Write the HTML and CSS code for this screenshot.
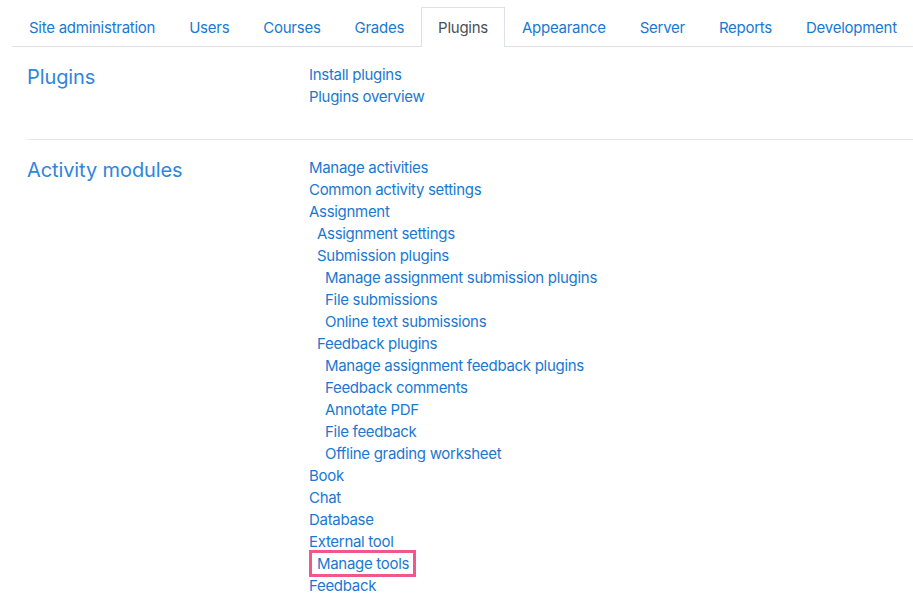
FILE: index.html
```html
<!DOCTYPE html>
<html>
<head>
<meta charset="utf-8">
<link rel="stylesheet" href="styles.css">
</head>
<body>
<ul class="tabs">
  <li class="tab"><a href="#">Site administration</a></li>
  <li class="tab"><a href="#">Users</a></li>
  <li class="tab"><a href="#">Courses</a></li>
  <li class="tab"><a href="#">Grades</a></li>
  <li class="tab active"><a href="#">Plugins</a></li>
  <li class="tab"><a href="#">Appearance</a></li>
  <li class="tab"><a href="#">Server</a></li>
  <li class="tab"><a href="#">Reports</a></li>
  <li class="tab"><a href="#">Development</a></li>
</ul>
<div class="content">
  <section class="row first">
    <h3 class="heading">Plugins</h3>
    <ul class="links">
      <li><a href="#">Install plugins</a></li>
      <li><a href="#">Plugins overview</a></li>
    </ul>
  </section>
  <section class="row">
    <h3 class="heading">Activity modules</h3>
    <ul class="links">
      <li><a href="#">Manage activities</a></li>
      <li><a href="#">Common activity settings</a></li>
      <li><a href="#">Assignment</a></li>
      <li class="l1"><a href="#">Assignment settings</a></li>
      <li class="l1"><a href="#">Submission plugins</a></li>
      <li class="l2"><a href="#">Manage assignment submission plugins</a></li>
      <li class="l2"><a href="#">File submissions</a></li>
      <li class="l2"><a href="#">Online text submissions</a></li>
      <li class="l1"><a href="#">Feedback plugins</a></li>
      <li class="l2"><a href="#">Manage assignment feedback plugins</a></li>
      <li class="l2"><a href="#">Feedback comments</a></li>
      <li class="l2"><a href="#">Annotate PDF</a></li>
      <li class="l2"><a href="#">File feedback</a></li>
      <li class="l2"><a href="#">Offline grading worksheet</a></li>
      <li><a href="#">Book</a></li>
      <li><a href="#">Chat</a></li>
      <li><a href="#">Database</a></li>
      <li><a href="#">External tool</a></li>
      <li class="highlight"><a href="#">Manage tools</a></li>
      <li><a href="#">Feedback</a></li>
    </ul>
  </section>
</div>
</body>
</html>
```
FILE: styles.css
```css
html, body {
  margin: 0;
  padding: 0;
  background: #fff;
  font-family: Inter, "Noto Sans", sans-serif;
  font-size: 15px;
  letter-spacing: -0.3px;
  line-height: 22px;
  color: #495057;
  overflow: hidden;
}
a {
  color: #1a78d2;
  text-decoration: none;
}
ul {
  list-style: none;
  margin: 0;
  padding: 0;
}
.tabs {
  display: flex;
  margin: 7px 0 0 12px;
  border-bottom: 1px solid #dee2e6;
  white-space: nowrap;
  letter-spacing: -0.26px;
}
.tab a {
  display: block;
  padding: 9px 16px 7px;
  border: 1px solid transparent;
  border-bottom: 0;
}
.tab.active a {
  color: #495057;
  background: #fff;
  border-color: #dee2e6;
  margin-bottom: -1px;
  padding-bottom: 8px;
}
.content {
  padding: 16px 0 0 27px;
}
.row {
  display: grid;
  grid-template-columns: 282px 1fr;
}
.row.first {
  padding-bottom: 31px;
  border-bottom: 1px solid #e5e7ea;
  margin-bottom: 16px;
}
.heading {
  margin: 0;
  font-weight: 400;
  font-size: 20px;
  letter-spacing: -0.1px;
  line-height: 28px;
  color: #2f86dc;
}
.links {
  padding-top: 1px;
}
.links li { white-space: nowrap; }
.links li.l1 { padding-left: 8px; }
.links li.l2 { padding-left: 16px; }
.links li.highlight {
  width: fit-content;
  padding: 0 4px 0 5px;
  border: 3px solid #f2578c;
  box-sizing: border-box;
  height: 27px;
  line-height: 21px;
  margin: -3px 0 -2px;
}
```
